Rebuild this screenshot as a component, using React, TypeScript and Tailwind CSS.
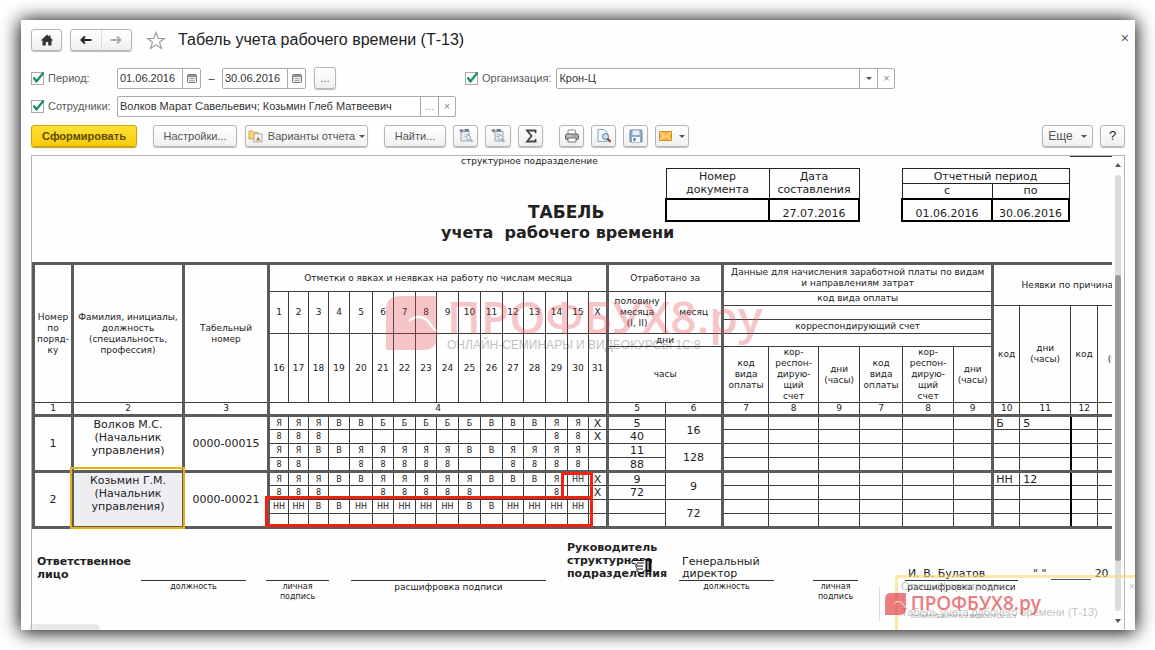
import React from "react";
import clsx from "clsx";

const CELL = "border border-[#3c3c3c] p-0 text-center align-middle font-normal";
const THICK_R = "border-r-[3px] border-r-[#5c5c5c]";
const THICK_T = "border-t-[3px] border-t-[#5c5c5c]";
const THICK_B = "border-b-[3px] border-b-[#5c5c5c]";
const BTN =
  "flex h-[22px] shrink-0 items-center justify-center rounded-[3px] border border-[#b5b5b5] bg-linear-to-b from-white to-[#f0f0f0] whitespace-nowrap shadow-[0_1px_1px_#bdbdbd]";

const COLUMNS = [
  "w-[39px]", "w-[111px]", "w-[85px]",
  "w-[20px]", "w-[20px]", "w-[20px]", "w-[21px]", "w-[23px]", "w-[21px]", "w-[22px]", "w-[21px]",
  "w-[22px]", "w-[22px]", "w-[22px]", "w-[21px]", "w-[22px]", "w-[22px]", "w-[21px]", "w-[19px]",
  "w-[58px]", "w-[57px]",
  "w-[46px]", "w-[50px]", "w-[41px]", "w-[43px]", "w-[51px]", "w-[39px]",
  "w-[27px]", "w-[51px]", "w-[27px]", "w-[50px]",
];

const FIRST_HALF = ["1", "2", "3", "4", "5", "6", "7", "8", "9", "10", "11", "12", "13", "14", "15", "X"];
const SECOND_HALF = ["16", "17", "18", "19", "20", "21", "22", "23", "24", "25", "26", "27", "28", "29", "30", "31"];

type Employee = {
  no: string;
  name: string;
  tab: string;
  days: string[][];
  half: string[];
  month: string[];
  absence: [string, string];
};

const EMPLOYEES: Employee[] = [
  {
    no: "1",
    name: "Волков М.С.",
    tab: "0000-00015",
    days: [
      "Я Я Я В В Б Б Б Б Б В В В Я Я X".split(" "),
      "8 8 8 - - - - - - - - - - 8 8 X".split(" "),
      "Я Я В В Я Я Я Я Я В В Я Я Я Я -".split(" "),
      "8 8 - - 8 8 8 8 8 - - 8 8 8 8 -".split(" "),
    ],
    half: ["5", "40", "11", "88"],
    month: ["16", "128"],
    absence: ["Б", "5"],
  },
  {
    no: "2",
    name: "Козьмин Г.М.",
    tab: "0000-00021",
    days: [
      "Я Я Я В В Я Я Я Я Я В В В Я НН X".split(" "),
      "8 8 8 - - 8 8 8 8 8 - - - 8 - X".split(" "),
      "НН НН В В НН НН НН НН НН В В НН НН НН НН -".split(" "),
      "- - - - - - - - - - - - - - - -".split(" "),
    ],
    half: ["9", "72", "", ""],
    month: ["9", "72"],
    absence: ["НН", "12"],
  },
];

function Caret() {
  return <span className="inline-block border-x-[3px] border-t-[3px] border-x-transparent border-t-[#555]" />;
}

function Check({ id, label }: { id: string; label: string }) {
  return (
    <div className="flex items-center gap-1">
      <span className="relative flex size-[13px]">
        <input id={id} type="checkbox" defaultChecked className="size-[13px] appearance-none border border-[#a8a8a8] bg-white" />
        <svg viewBox="0 0 14 14" className="pointer-events-none absolute -top-px left-0 size-[14px]">
          <path d="M2.5 6.5 L5.5 10.5 L12.5 1.5" fill="none" stroke="#149060" strokeWidth="2.2" />
        </svg>
      </span>
      <label htmlFor={id} className="text-[#5a5a5a]">{label}</label>
    </div>
  );
}

function CalendarIcon() {
  return (
    <svg viewBox="0 0 10 9" className="h-[9px] w-[10px]">
      <rect x=".5" y=".5" width="9" height="8" rx="1" fill="#e8e8e8" stroke="#777" />
      <path d="M1 2h8" stroke="#777" strokeWidth="1.5" />
      <path d="M2.5 4.5h5M2.5 6.5h5" stroke="#aaa" />
    </svg>
  );
}

function DateField({ label, value }: { label: string; value: string }) {
  return (
    <div className="flex h-[21px] w-[84px] rounded-[2px] border border-[#aaa] bg-white">
      <input aria-label={label} defaultValue={value} className="min-w-0 flex-1 pl-[2px] text-[#333] outline-none" />
      <button aria-label={`${label}: календарь`} className="flex w-[18px] items-center justify-center border-l border-[#aaa]">
        <CalendarIcon />
      </button>
    </div>
  );
}

function DocLogo({ className }: { className: string }) {
  return (
    <svg viewBox="0 0 51 54" className={className}>
      <path d="M0 14 Q0 0 14 0 H51 V40 Q51 54 37 54 H0 Z" fill="#e2444a" />
      <path d="M23 25 C31 18 40 21 44 28 Q47 33 51 35" fill="none" stroke="#fff" strokeWidth="2.4" />
    </svg>
  );
}

function CopyIcon({ single = false }: { single?: boolean }) {
  return (
    <svg viewBox="0 0 16 16" className="size-4 opacity-80">
      <rect x={single ? 5 : 3} y="3.5" width="8" height="9.5" fill="#e2e9f2" stroke="#8795a8" />
      <path d="M1.5 2.5h4M3.5 1v3.500" stroke="#515c6c" strokeWidth="1.3" />
      <rect x="6.5" y="1" width="4.500" height="2.500" fill="#515c6c" />
      <path d="M6.5 6.500h4M6.500 8.500h3" stroke="#a7b6ca" />
      <circle cx="10.500" cy="9.500" r="2.200" fill="#eef4fc" stroke="#8a98ac" />
      <path d="M12 11.500l2.500 2.500" stroke="#9b9fae" strokeWidth="2" />
    </svg>
  );
}

function Toolbar() {
  return (
    <div className="mt-2 flex items-center text-[11px] text-[#555]">
      <button className="h-[22px] w-[106px] shrink-0 rounded-[3px] border border-[#d1a800] bg-linear-to-b from-[#ffe135] to-[#f7cb00] font-bold text-[#5c4c00] shadow-[0_1px_1px_#b39b30]">
        Сформировать
      </button>
      <button className={clsx(BTN, "ml-4 w-[84px]")}>Настройки...</button>
      <button className={clsx(BTN, "ml-2 w-[123px] gap-1")}>
        <svg viewBox="0 0 16 14" className="h-[14px] w-4 shrink-0">
          <path d="M1 2h4l1 1.500h4V10H1z" fill="#f8d477" stroke="#d7a840" />
          <rect x="6" y="5" width="8" height="8" fill="#f5f5f8" stroke="#a9a9b5" />
          <path d="M8 11.500l2-4 2.500 4z" fill="#b0804d" />
        </svg>
        Варианты отчета
        <Caret />
      </button>
      <button className={clsx(BTN, "ml-4 w-[62px]")}>Найти...</button>
      <div className="ml-[7px] flex gap-[7px]">
        <button aria-label="Развернуть группы" className={clsx(BTN, "w-[25px]")}><CopyIcon /></button>
        <button aria-label="Свернуть группы" className={clsx(BTN, "w-[26px]")}><CopyIcon single /></button>
        <button aria-label="Сумма" className={clsx(BTN, "w-[25px]")}>
          <svg viewBox="0 0 12 14" className="h-[14px] w-3">
            <path d="M10.500 4V1.500H2L6.500 7 2 12.500h8.500V10" fill="none" stroke="#444" strokeWidth="1.800" />
          </svg>
        </button>
      </div>
      <div className="ml-4 flex gap-[7px]">
        <button aria-label="Печать" className={clsx(BTN, "w-[25px]")}>
          <svg viewBox="0 0 16 14" className="h-[14px] w-4">
            <path d="M4 5V1h7l1 4" fill="#fff" stroke="#888" />
            <rect x="1.500" y="5" width="13" height="5.500" rx="1.500" fill="#a9a39d" stroke="#66605a" />
            <path d="M4 9h8v4H4z" fill="#fff" stroke="#777" />
            <path d="M3 7h5" stroke="#e8e4dd" />
          </svg>
        </button>
        <button aria-label="Просмотр" className={clsx(BTN, "w-[25px]")}>
          <svg viewBox="0 0 16 14" className="h-[14px] w-4">
            <path d="M2 .5h6l3 3v9H2z" fill="#f3f8fe" stroke="#7ea3c8" />
            <circle cx="9.500" cy="7.500" r="3" fill="#cbdff5" stroke="#5a7594" />
            <path d="M11.500 9.500l3 3.500" stroke="#8a4b3a" strokeWidth="2" />
          </svg>
        </button>
        <button aria-label="Сохранить" className={clsx(BTN, "w-[25px]")}>
          <svg viewBox="0 0 14 14" className="size-[14px]">
            <rect x="1" y="1" width="12" height="12" rx="1" fill="#8fa9c6" stroke="#6a83a0" />
            <rect x="3.500" y="1.500" width="7" height="4.500" fill="#e6eef6" />
            <rect x="3" y="8" width="8" height="5" fill="#f5f7f9" />
            <rect x="4.500" y="9" width="2" height="3" fill="#56718f" />
          </svg>
        </button>
        <button aria-label="Отправить" className={clsx(BTN, "w-[34px] gap-[7px]")}>
          <svg viewBox="0 0 13 10" className="h-[10px] w-[13px]">
            <rect x=".5" y=".5" width="12" height="9" fill="#f7b643" stroke="#d18e1c" />
            <path d="M1 1l5.500 5L12 1M1 9l4-4M12 9L8 5" fill="none" stroke="#fff0cd" />
          </svg>
          <Caret />
        </button>
      </div>
      <button className={clsx(BTN, "ml-auto w-[51px] gap-2 text-[12px]")}>Еще <Caret /></button>
      <button aria-label="Справка" className={clsx(BTN, "ml-[7px] w-[25px] text-[13px] text-[#222]")}>?</button>
    </div>
  );
}

function SheetHead() {
  const thin = "border border-[#222] p-0 text-center font-normal";
  const bold = "border-2 border-black p-0 text-center align-bottom";
  return (
    <>
      <div className="flex">
        <div className="flex h-[66px] w-[633px] shrink-0 flex-col justify-between">
          <div className="ml-[429px] text-[9px] leading-[11px]">структурное подразделение</div>
          <div className="ml-[496px] text-[17px] leading-5 font-bold">ТАБЕЛЬ</div>
        </div>
        <table className="mt-3 w-[195px] shrink-0 table-fixed border-collapse text-[11px] leading-[13px]">
          <colgroup><col className="w-[103px]" /><col /></colgroup>
          <thead>
            <tr className="h-[30px]">
              <th className={thin}>Номер<br />документа</th>
              <th className={thin}>Дата<br />составления</th>
            </tr>
          </thead>
          <tbody>
            <tr className="h-[22px]">
              <td className={bold} />
              <td className={bold}>27.07.2016</td>
            </tr>
          </tbody>
        </table>
        <table className="mt-3 ml-[41px] w-[169px] shrink-0 table-fixed border-collapse text-[11px] leading-[13px]">
          <colgroup><col className="w-[90px]" /><col /></colgroup>
          <thead>
            <tr className="h-[15px]"><th colSpan={2} className={thin}>Отчетный период</th></tr>
            <tr className="h-[15px]">
              <th className={thin}>с</th>
              <th className={thin}>по</th>
            </tr>
          </thead>
          <tbody>
            <tr className="h-[22px]">
              <td className={bold}>01.06.2016</td>
              <td className={bold}>30.06.2016</td>
            </tr>
          </tbody>
        </table>
        <div className="h-px w-12 shrink-0 bg-[#333]" />
      </div>
      <div className="mt-px mb-[19px] ml-[409px] text-[16px] leading-[20px] font-bold whitespace-pre">учета  рабочего времени</div>
    </>
  );
}

function DayHeads({ days }: { days: string[] }) {
  return days.map((d, i) => (
    <th key={d} rowSpan={days === FIRST_HALF ? 3 : 2} className={clsx(CELL, i === 15 && THICK_R)}>{d}</th>
  ));
}

function TimeTable() {
  return (
    <table className="w-[1114px] table-fixed border-collapse text-[9px] leading-[11px]">
      <colgroup>{COLUMNS.map((w, i) => <col key={i} className={w} />)}</colgroup>
      <thead>
        <tr className="h-[28px]">
          <th rowSpan={6} className={clsx(CELL, THICK_T, THICK_R, "border-l-[3px] border-l-[#5c5c5c]")}>Номер<br />по<br />поряд-<br />ку</th>
          <th rowSpan={6} className={clsx(CELL, THICK_T, THICK_R)}>Фамилия, инициалы,<br />должность<br />(специальность,<br />профессия)</th>
          <th rowSpan={6} className={clsx(CELL, THICK_T, THICK_R)}>Табельный<br />номер</th>
          <th colSpan={16} className={clsx(CELL, THICK_T, THICK_R)}>Отметки о явках и неявках на работу по числам месяца</th>
          <th colSpan={2} className={clsx(CELL, THICK_T, THICK_R)}>Отработано за</th>
          <th colSpan={6} className={clsx(CELL, THICK_T, THICK_R)}>Данные для начисления заработной платы по видам<br />и направлениям затрат</th>
          <th colSpan={4} rowSpan={2} className={clsx(CELL, THICK_T)}>Неявки по причинам</th>
        </tr>
        <tr className="h-[14px]">
          <DayHeads days={FIRST_HALF} />
          <th rowSpan={3} className={CELL}>половину<br />месяца<br />(I, II)</th>
          <th rowSpan={3} className={clsx(CELL, THICK_R)}>месяц</th>
          <th colSpan={6} className={clsx(CELL, THICK_R)}>код вида оплаты</th>
        </tr>
        <tr className="h-[14px]">
          <th colSpan={6} className={clsx(CELL, THICK_R)} />
          <th rowSpan={4} className={CELL}>код</th>
          <th rowSpan={4} className={CELL}>дни<br />(часы)</th>
          <th rowSpan={4} className={CELL}>код</th>
          <th rowSpan={4} className={CELL}>дни<br />(часы)</th>
        </tr>
        <tr className="h-[14px]">
          <th colSpan={6} className={clsx(CELL, THICK_R)}>корреспондирующий счет</th>
        </tr>
        <tr className="h-[13px]">
          <DayHeads days={SECOND_HALF} />
          <th colSpan={2} className={clsx(CELL, THICK_R)}>дни</th>
          <th colSpan={6} className={clsx(CELL, THICK_R)} />
        </tr>
        <tr className="h-[56px]">
          <th colSpan={2} className={clsx(CELL, THICK_R)}>часы</th>
          {[0, 1].map((g) => (
            <React.Fragment key={g}>
              <th className={CELL}>код<br />вида<br />оплаты</th>
              <th className={CELL}>кор-<br />респон-<br />дирую-<br />щий<br />счет</th>
              <th className={clsx(CELL, g === 1 && THICK_R)}>дни<br />(часы)</th>
            </React.Fragment>
          ))}
        </tr>
        <tr className="h-[13px]">
          <th className={clsx(CELL, THICK_B, THICK_R, "border-l-[3px] border-l-[#5c5c5c]")}>1</th>
          <th className={clsx(CELL, THICK_B, THICK_R)}>2</th>
          <th className={clsx(CELL, THICK_B, THICK_R)}>3</th>
          <th colSpan={16} className={clsx(CELL, THICK_B, THICK_R)}>4</th>
          {["5", "6", "7", "8", "9", "7", "8", "9", "10", "11", "12", ""].map((n, i) => (
            <th key={i} className={clsx(CELL, THICK_B, (i === 1 || i === 7) && THICK_R)}>{n}</th>
          ))}
        </tr>
      </thead>
      {EMPLOYEES.map((e) => (
        <tbody key={e.no}>
          {e.days.map((row, r) => {
            const end = r === 3 && THICK_B;
            return (
              <tr key={r} className="h-[14px] text-[11px] leading-[11px]">
                {r === 0 && (
                  <>
                    <td rowSpan={4} className={clsx(CELL, THICK_B, THICK_R, "border-l-[3px] border-l-[#5c5c5c]")}>{e.no}</td>
                    <td rowSpan={4} className={clsx(CELL, THICK_B, THICK_R, "leading-[13px]", e.no === "2" && "bg-[#eeeef2]")}>
                      <div className="h-[51px]">{e.name}<br />(Начальник<br />управления)</div>
                    </td>
                    <td rowSpan={4} className={clsx(CELL, THICK_B, THICK_R)}>{e.tab}</td>
                  </>
                )}
                {row.map((d, i) => (
                  <td key={i} className={clsx(CELL, end, i === 15 ? THICK_R : "text-[8px]")}>{d === "-" ? "" : d}</td>
                ))}
                <td className={clsx(CELL, end)}>{e.half[r]}</td>
                {r % 2 === 0 && (
                  <td rowSpan={2} className={clsx(CELL, THICK_R, r === 2 && THICK_B)}>{e.month[r / 2]}</td>
                )}
                {[0, 1, 2, 3, 4, 5].map((i) => <td key={i} className={clsx(CELL, end, i === 5 && THICK_R)} />)}
                <td className={clsx(CELL, end, "pl-[2px] text-left")}>{r === 0 ? e.absence[0] : ""}</td>
                <td className={clsx(CELL, end, "border-r-2 border-r-black pl-[3px] text-left")}>{r === 0 ? e.absence[1] : ""}</td>
                <td className={clsx(CELL, end)} />
                <td className={clsx(CELL, end)} />
              </tr>
            );
          })}
        </tbody>
      ))}
    </table>
  );
}

type SignProps = { width: string; value?: React.ReactNode; caption: React.ReactNode; wide?: boolean };

function Sign({ width, value, caption, wide = false }: SignProps) {
  return (
    <div className={clsx("shrink-0", width)}>
      <div className="flex h-10 items-end border-b border-[#333] pl-[3px] text-[11px] leading-3">{value}</div>
      <div className={clsx("pt-px text-center leading-[10px]", wide ? "text-[9px]" : "text-[8px]")}>{caption}</div>
    </div>
  );
}

function SheetFoot() {
  const personal = <>личная<br />подпись</>;
  return (
    <div className="mt-3 flex text-[11px] leading-[13px]">
      <div className="flex h-10 w-[109px] shrink-0 items-end pl-[5px] font-bold">Ответственное<br />лицо</div>
      <Sign width="w-[105px] mr-5" caption="должность" />
      <Sign width="w-[63px] mr-[22px]" caption={personal} />
      <Sign width="w-[195px] mr-[21px]" caption="расшифровка подписи" wide />
      <div className="w-[112px] shrink-0 font-bold">Руководитель<br />структурного<br />подразделения</div>
      <Sign width="w-[95px] mr-[39px]" value={<>Генеральный<br />директор</>} caption="должность" />
      <Sign width="w-[45px] mr-[47px]" caption={personal} />
      <Sign width="w-[113px]" value="И. В. Булатов" caption="расшифровка подписи" wide />
      <div className="flex h-[39px] shrink-0 items-end gap-1 pl-[15px]">
        <span className="whitespace-pre">" "</span>
        <span className="w-10 border-b border-[#555]" />
        <span>20</span>
      </div>
    </div>
  );
}

function Brand() {
  return (
    <div className="pointer-events-none absolute top-[140px] left-[354px] flex gap-[10px] opacity-30">
      <DocLogo className="h-[54px] w-[51px]" />
      <div className="font-['Open_Sans',sans-serif] whitespace-nowrap">
        <div className="text-[46px] leading-[40px] font-semibold text-[#e2444a]">ПРОФБУХ8.ру</div>
        <div className="font-['Liberation_Sans',Arial,sans-serif] text-[12px] leading-[18px] text-[#333]">ОНЛАЙН-СЕМИНАРЫ И ВИДЕОКУРСЫ 1С:8</div>
      </div>
    </div>
  );
}

function Notice() {
  return (
    <div className="absolute right-0 bottom-0 h-[55px] w-[240px] overflow-hidden rounded-tl-[3px] border-t-[3px] border-l-[3px] border-[#f7d774]/60 pt-[2px] pl-[3px] font-['Liberation_Sans',Arial,sans-serif] text-[#999]/60">
      <div className="flex justify-between text-[11px] leading-[13px]"><span>Отчет сформирован:</span><span>×</span></div>
      <div className="mt-3 text-[11px] leading-[14px]">Табель учета рабочего времени (Т-13)</div>
    </div>
  );
}

export default function App() {
  return (
    <div className="flex h-screen bg-white py-5 pr-5 pl-[21px] font-['Liberation_Sans',Arial,sans-serif] text-[11px] text-[#333]">
      <main className="relative flex min-w-0 flex-1 flex-col bg-[#fefefe] shadow-[0_1px_18px_1px_#000]">
        <div className="px-[10px] pt-[9px]">
          <header className="flex items-center">
            <button aria-label="Начальная страница" className={clsx(BTN, "w-[31px]")}>
              <svg viewBox="0 0 14 12" className="h-3 w-[14px]"><path d="M7 .5L.8 6.500h1.700V11.500h3.300V8h2.400v3.500h3.300v-5h1.700L10.500 3.800V1.500H9v.9z" fill="#333" /></svg>
            </button>
            <div className={clsx(BTN, "ml-2 w-[62px]")}>
              <button aria-label="Назад" className="flex h-full flex-1 items-center justify-center border-r border-[#ddd]">
                <svg viewBox="0 0 12 10" className="h-[10px] w-3"><path d="M11.500 5H2M5 1.500L1.500 5 5 8.500" fill="none" stroke="#222" strokeWidth="2" /></svg>
              </button>
              <button aria-label="Вперед" className="flex h-full flex-1 items-center justify-center">
                <svg viewBox="0 0 12 10" className="h-[10px] w-3"><path d="M.5 5H10M7 1.500L10.500 5 7 8.500" fill="none" stroke="#aaa" strokeWidth="1.800" /></svg>
              </button>
            </div>
            <button aria-label="Добавить в избранное" className="ml-[14px]">
              <svg viewBox="0 0 20 19" className="h-[19px] w-5"><path d="M10 1.500l2.200 6h6.300l-5 3.800 1.900 6.200L10 13.800l-5.400 3.700 1.900-6.200-5-3.800h6.300z" fill="#fff" stroke="#999" strokeWidth="1.100" /></svg>
            </button>
            <h1 className="ml-3 text-[16px] leading-5 text-[#222]">Табель учета рабочего времени (Т-13)</h1>
            <button aria-label="Закрыть" className="mb-[5px] ml-auto -mr-1 text-[14px] leading-4 text-[#555]">×</button>
          </header>

          <div className="mt-4 flex h-[22px] items-center">
            <div className="w-[86px]"><Check id="period" label="Период:" /></div>
            <DateField label="Начало периода" value="01.06.2016" />
            <span className="w-[21px] text-center">–</span>
            <DateField label="Конец периода" value="30.06.2016" />
            <button aria-label="Выбрать период" className={clsx(BTN, "ml-2 w-[22px] text-[#6b6434]")}>...</button>
            <div className="mr-[5px] ml-[129px]"><Check id="organization" label="Организация:" /></div>
            <div className="flex h-[21px] max-w-[339px] flex-1 rounded-[2px] border border-[#aaa] bg-white">
              <input aria-label="Организация" defaultValue="Крон-Ц" className="min-w-0 flex-1 pl-[2px] outline-none" />
              <button aria-label="Выбрать организацию" className="flex w-[18px] items-center justify-center border-l border-[#aaa]"><Caret /></button>
              <button aria-label="Очистить организацию" className="w-[17px] border-l border-[#aaa] text-[#888]">×</button>
            </div>
          </div>

          <div className="mt-[7px] flex h-[21px] items-center">
            <div className="w-[86px]"><Check id="staff" label="Сотрудники:" /></div>
            <div className="flex h-[21px] w-[339px] rounded-[2px] border border-[#aaa] bg-white">
              <input aria-label="Сотрудники" defaultValue="Волков Марат Савельевич; Козьмин Глеб Матвеевич" className="min-w-0 flex-1 pl-[2px] outline-none" />
              <button aria-label="Выбрать сотрудников" className="w-[18px] border-l border-[#aaa] text-[#999]">...</button>
              <button aria-label="Очистить сотрудников" className="w-[17px] border-l border-[#aaa] text-[#888]">×</button>
            </div>
          </div>

          <Toolbar />
        </div>

        <section className="mt-2 mr-[10px] ml-[10px] flex min-h-0 flex-1 border-x border-t border-[#b5b5b5]">
          <div className="relative min-w-0 flex-1 overflow-hidden font-['DejaVu_Sans',Verdana,sans-serif] text-[#222]">
            <SheetHead />
            <div className="relative">
              <TimeTable />
              <div className="pointer-events-none absolute top-[205px] left-[38px] h-[62px] w-[115px] border-2 border-[#e3b212]" />
              <div className="pointer-events-none absolute top-[234px] left-[233px] h-[31px] w-[328px] border-[3px] border-[#f5200e]" />
              <div className="pointer-events-none absolute top-[210px] left-[529px] h-[27px] w-[32px] border-[3px] border-[#f5200e]" />
            </div>
            <SheetFoot />
            <Brand />
            <svg viewBox="0 0 22 16" className="absolute top-[402px] left-[599px] h-4 w-[22px]">
              <path d="M1 2.500h11l3-1.500v11l-4 2.500H8.500L6 13V10L4.500 8 6 6.500 1 5z" fill="#fff" stroke="#111" />
              <path d="M6 5h7M6 8h6M7 11h5" stroke="#111" />
              <path d="M15 1h5.500v13H15z" fill="#111" />
              <path d="M17 3v9" stroke="#fff" />
            </svg>
          </div>
          <div className="flex w-3 shrink-0 flex-col items-center py-[7px]">
            <span className="border-x-[3px] border-b-4 border-x-transparent border-b-[#555]" />
            <div className="mt-2 mb-2 flex w-[6px] flex-1 flex-col rounded-full bg-[#dcdcdc]">
              <div className="mt-[100px] h-[286px] rounded-full bg-[#999]" />
            </div>
            <span className="border-x-[3px] border-t-4 border-x-transparent border-t-[#555]" />
          </div>
        </section>

        <Notice />
        <div className="pointer-events-none absolute right-[94px] bottom-[9px] flex h-[34px] items-center gap-[5px] border-l border-[#ccc] pl-[5px] opacity-70">
          <DocLogo className="h-[22px] w-[21px]" />
          <div className="font-['Open_Sans',sans-serif] whitespace-nowrap">
            <div className="pt-1 text-[19px] leading-[20px] font-semibold text-[#e2444a]">ПРОФБУХ8.ру</div>
            <div className="font-['Liberation_Sans',Arial,sans-serif] text-[5px] leading-[6px] text-[#777]">ОНЛАЙН-СЕМИНАРЫ И ВИДЕОКУРСЫ 1С:8</div>
          </div>
        </div>
        <div className="absolute bottom-0 left-2 h-[6px] w-[71px] rounded-t-[5px] bg-[#bbb]/30" />
      </main>
    </div>
  );
}
